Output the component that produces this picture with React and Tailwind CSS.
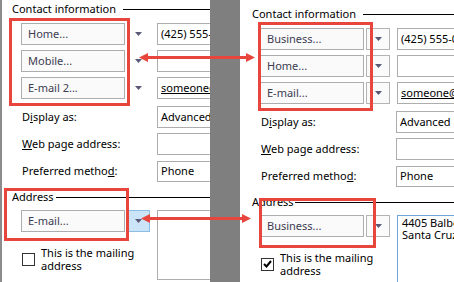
import React from "react";

const font = { fontFamily: '"Noto Sans", "Open Sans", sans-serif' };

function Caret() {
  return (
    <svg width="7" height="4" viewBox="0 0 7 4" className="block">
      <path d="M0 0 L7 0 L3.5 4 Z" fill="#5a5a78" />
    </svg>
  );
}

function Header({ title, lineGap }) {
  return (
    <div className="flex h-[14px] items-center">
      <span className="ml-[12px] shrink-0 text-[11px] leading-[14px] whitespace-nowrap text-black">{title}</span>
      <div className="h-px flex-1 bg-black" style={{ marginLeft: lineGap }} />
    </div>
  );
}

function Combo({ label }) {
  return (
    <div className="flex h-full w-[104px] shrink-0 items-center border border-[#adadad] bg-[#fafafa] pl-[6px] text-[11px] whitespace-nowrap text-[#3c3c52]">
      {label}
    </div>
  );
}

function DropButton({ kind }) {
  if (kind === "hover") {
    return (
      <div className="ml-[2px] flex h-full w-[23px] shrink-0 items-center justify-center border border-[#8cbde4] bg-[#cce4f7]">
        <Caret />
      </div>
    );
  }
  if (kind === "boxed") {
    return (
      <div className="ml-[2px] flex h-full w-[24px] shrink-0 items-center justify-center border border-[#b4b4b4] bg-[#fafafa]">
        <Caret />
      </div>
    );
  }
  return (
    <div className="ml-[2px] flex h-full w-[23px] shrink-0 items-center justify-center">
      <Caret />
    </div>
  );
}

function Field({ children, link }) {
  return (
    <div
      className={`ml-[7px] flex h-full w-[120px] shrink-0 items-center border border-[#adadad] bg-white pl-[3px] text-[11px] whitespace-nowrap text-black ${
        link ? "underline" : ""
      }`}
    >
      {children}
    </div>
  );
}

function LabelRow({ label, value, top, height }) {
  return (
    <div className="flex items-center" style={{ marginTop: top, height }}>
      <div className="ml-[1px] w-[128px] shrink-0 text-[11px] whitespace-nowrap text-black">{label}</div>
      <Field>{value}</Field>
    </div>
  );
}

function Panel({ variant }) {
  const right = variant === "right";
  const combos = right ? ["Business...", "Home...", "E-mail..."] : ["Home...", "Mobile...", "E-mail 2..."];
  const values = ["(425) 555-0187", "", "someone@example.com"];

  return (
    <div
      className="h-full shrink-0 overflow-hidden bg-white"
      style={{ paddingTop: right ? 7 : 2, width: right ? 214 : 210, borderLeft: right ? "none" : "2px solid #8c8c8c" }}
    >
      <div style={{ marginLeft: right ? 0 : -2, width: 330 }}>
        <Header title="Contact information" lineGap={7} />
        <div style={{ paddingLeft: right ? 20 : 21 }}>
          {combos.map((c, i) => (
            <div key={c} className="flex h-[22px] items-center" style={{ marginTop: i === 0 ? 7 : 5 }}>
              <Combo label={c} />
              <DropButton kind={right ? "boxed" : "flat"} />
              <Field link={i === 2}>{values[i]}</Field>
            </div>
          ))}
          <LabelRow
            top={7}
            height={22}
            label={
              <>
                D<u>i</u>splay as:
              </>
            }
            value="Advanced Micro"
          />
          <LabelRow
            top={5}
            height={22}
            label={
              <>
                <u>W</u>eb page address:
              </>
            }
            value=""
          />
          <LabelRow
            top={6}
            height={21}
            label={
              <>
                Preferred metho<u>d</u>:
              </>
            }
            value="Phone"
          />
        </div>
        <div className="mt-[8px]">
          <Header title="Address" lineGap={right ? 1 : 2} />
        </div>
        <div className="mt-[6px] flex" style={{ paddingLeft: right ? 20 : 21 }}>
          <div className="flex shrink-0 flex-col">
            <div className="flex h-[22px] items-center">
              <Combo label={right ? "Business..." : "E-mail..."} />
              <DropButton kind={right ? "boxed" : "hover"} />
            </div>
            <div className="mt-[14px] flex items-center">
              <div className="ml-[1px] flex h-[13px] w-[13px] shrink-0 items-center justify-center border border-[#333] bg-white">
                {right && (
                  <svg width="9" height="8" viewBox="0 0 9 8">
                    <path d="M1 4 L3.5 6.5 L8 1" fill="none" stroke="#000" strokeWidth="2" />
                  </svg>
                )}
              </div>
              <div className="ml-[6px] text-[11px] leading-[13px] whitespace-nowrap text-black">
                This is the mailing
                <br />
                address
              </div>
            </div>
          </div>
          <div
            className="ml-[7px] w-[120px] shrink-0 border bg-white pt-[1px] pl-[4px] text-[11px] leading-[12px] whitespace-nowrap text-black"
            style={{ borderColor: right ? "#6fa3dc" : "#adadad", height: right ? 80 : 70 }}
          >
            {right && (
              <>
                4405 Balboa Drive
                <br />
                Santa Cruz, CA 95060
              </>
            )}
          </div>
        </div>
      </div>
    </div>
  );
}

function Annotations() {
  const red = "#e8463c";
  return (
    <>
      <div className="absolute left-[9px] top-[18px] h-[88px] w-[121px] border-[3px] border-[#e8463c]" />
      <div className="absolute left-[4px] top-[188px] h-[53px] w-[125px] border-[3px] border-[#e8463c]" />
      <div className="absolute left-[258px] top-[22px] h-[89px] w-[115px] border-[3px] border-[#e8463c]" />
      <div className="absolute left-[259px] top-[198px] h-[50px] w-[117px] border-[3px] border-[#e8463c]" />
      <svg className="pointer-events-none absolute left-0 top-0" width="454" height="282">
        <line x1="146" y1="57.5" x2="248" y2="57.5" stroke={red} strokeWidth="3" />
        <path d="M139 57.5 L148 53 L148 62 Z" fill={red} />
        <path d="M255 57.5 L246 53 L246 62 Z" fill={red} />
        <line x1="148" y1="218.5" x2="244" y2="218.5" stroke={red} strokeWidth="3" />
        <path d="M141 218.5 L150 214 L150 223 Z" fill={red} />
        <path d="M251 218.5 L242 214 L242 223 Z" fill={red} />
      </svg>
    </>
  );
}

export default function App() {
  return (
    <div className="relative flex h-[282px] w-[454px] overflow-hidden bg-white" style={font}>
      <Panel variant="left" />
      <div className="h-full w-[30px] shrink-0 bg-[#7f7f7f]" />
      <Panel variant="right" />
      <Annotations />
    </div>
  );
}
